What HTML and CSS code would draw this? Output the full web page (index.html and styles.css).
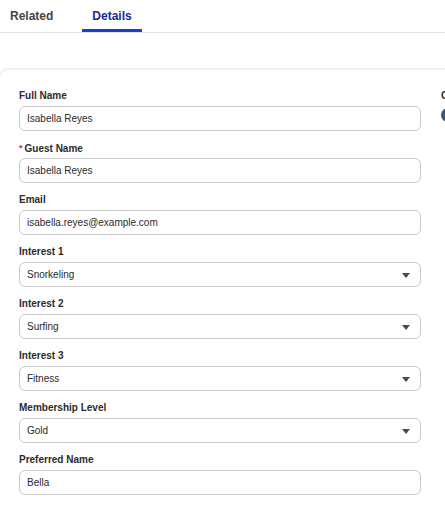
FILE: index.html
```html
<!DOCTYPE html>
<html lang="en">
<head>
  <meta charset="UTF-8">
  <title>Guest Details</title>
  <link rel="stylesheet" href="styles.css">
</head>
<body>
<div class="tabs">
  <a class="tab">Related</a>
  <a class="tab active">Details</a>
</div>

<div class="card">
  <div class="col">
    <div class="field">
      <label>Full Name</label>
      <div class="input">Isabella Reyes</div>
    </div>
    <div class="field">
      <label><abbr>*</abbr>Guest Name</label>
      <div class="input">Isabella Reyes</div>
    </div>
    <div class="field">
      <label>Email</label>
      <div class="input">isabella.reyes@example.com</div>
    </div>
    <div class="field">
      <label>Interest 1</label>
      <div class="input select">Snorkeling</div>
    </div>
    <div class="field">
      <label>Interest 2</label>
      <div class="input select">Surfing</div>
    </div>
    <div class="field">
      <label>Interest 3</label>
      <div class="input select">Fitness</div>
    </div>
    <div class="field">
      <label>Membership Level</label>
      <div class="input select">Gold</div>
    </div>
    <div class="field">
      <label>Preferred Name</label>
      <div class="input">Bella</div>
    </div>
  </div>

  <div class="col side">
    <div class="field">
      <label>Owner</label>
      <div class="owner"><span class="avatar"></span>Olivia Chen</div>
    </div>
  </div>
</div>
</body>
</html>
```

FILE: styles.css
```css
body {
  margin: 0;
  overflow: hidden;
  background: #fff;
  font: 10px/1.2 "Liberation Sans", Arial, sans-serif;
  color: #181818;
}

/* tab strip */
.tabs {
  display: flex;
  gap: 19px;
  height: 32px;
  border-bottom: 1px solid #e3e3e3;
}

.tab {
  padding: 0 10px;
  font-size: 12px;
  font-weight: bold;
  line-height: 32px;
  color: #444;
  box-sizing: border-box;
}

.tab.active {
  color: #1b2a8f;
  border-bottom: 3px solid #1a3fc4;
}

/* record card */
.card {
  display: flex;
  gap: 20px;
  width: 560px;
  margin-top: 37px;
  padding: 19px 0 0 19px;
  border-radius: 8px 0 0 0;
  box-shadow: 0 -1px 3px rgba(0, 0, 0, .12);
}

.col {
  width: 402px;
}

.field {
  margin-bottom: 10px;
}

.field label {
  display: block;
  height: 14px;
  margin-bottom: 3px;
  font-weight: bold;
  line-height: 14px;
  color: #2b2b2b;
}

.field abbr {
  margin-right: 2px;
  color: #c23934;
  font-size: 9px;
  vertical-align: 1px;
}

.input {
  position: relative;
  height: 25px;
  padding: 0 7px;
  box-sizing: border-box;
  border: 1px solid #c9c9c9;
  border-radius: 6px;
  line-height: 23px;
  color: #2a2a2a;
}

.select::after {
  content: '';
  position: absolute;
  right: 10px;
  top: 10px;
  border-left: 4px solid transparent;
  border-right: 4px solid transparent;
  border-top: 5px solid #4a4a4a;
}

.side {
  width: 120px;
}

.owner {
  display: flex;
  align-items: center;
  gap: 6px;
  height: 18px;
}

.avatar {
  width: 14px;
  height: 14px;
  border-radius: 50%;
  background: #3b5878;
}
```
